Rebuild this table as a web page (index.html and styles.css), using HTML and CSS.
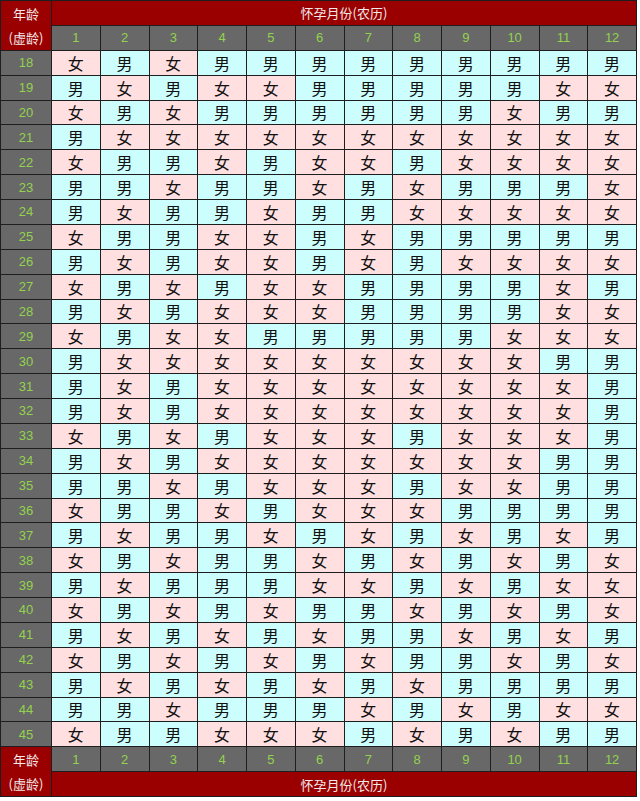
FILE: index.html
```html
<!DOCTYPE html>
<html lang="zh-CN">
<head>
<meta charset="utf-8">
<title>清宫图</title>
<link rel="stylesheet" href="styles.css">
</head>
<body>
<div class="chart">
  <div class="corner corner-top"><span>年龄</span><span>(虚龄)</span></div>
  <div class="title title-top">怀孕月份(农历)</div>
  <div class="num">1</div><div class="num">2</div><div class="num">3</div><div class="num">4</div><div class="num">5</div><div class="num">6</div><div class="num">7</div><div class="num">8</div><div class="num">9</div><div class="num">10</div><div class="num">11</div><div class="num">12</div>

  <div class="age">18</div><div class="c f">女</div><div class="c m">男</div><div class="c f">女</div><div class="c m">男</div><div class="c m">男</div><div class="c m">男</div><div class="c m">男</div><div class="c m">男</div><div class="c m">男</div><div class="c m">男</div><div class="c m">男</div><div class="c m">男</div>
  <div class="age">19</div><div class="c m">男</div><div class="c f">女</div><div class="c m">男</div><div class="c f">女</div><div class="c f">女</div><div class="c m">男</div><div class="c m">男</div><div class="c m">男</div><div class="c m">男</div><div class="c m">男</div><div class="c f">女</div><div class="c f">女</div>
  <div class="age">20</div><div class="c f">女</div><div class="c m">男</div><div class="c f">女</div><div class="c m">男</div><div class="c m">男</div><div class="c m">男</div><div class="c m">男</div><div class="c m">男</div><div class="c m">男</div><div class="c f">女</div><div class="c m">男</div><div class="c m">男</div>
  <div class="age">21</div><div class="c m">男</div><div class="c f">女</div><div class="c f">女</div><div class="c f">女</div><div class="c f">女</div><div class="c f">女</div><div class="c f">女</div><div class="c f">女</div><div class="c f">女</div><div class="c f">女</div><div class="c f">女</div><div class="c f">女</div>
  <div class="age">22</div><div class="c f">女</div><div class="c m">男</div><div class="c m">男</div><div class="c f">女</div><div class="c m">男</div><div class="c f">女</div><div class="c f">女</div><div class="c m">男</div><div class="c f">女</div><div class="c f">女</div><div class="c f">女</div><div class="c f">女</div>
  <div class="age">23</div><div class="c m">男</div><div class="c m">男</div><div class="c f">女</div><div class="c m">男</div><div class="c m">男</div><div class="c f">女</div><div class="c m">男</div><div class="c f">女</div><div class="c m">男</div><div class="c m">男</div><div class="c m">男</div><div class="c f">女</div>
  <div class="age">24</div><div class="c m">男</div><div class="c f">女</div><div class="c m">男</div><div class="c m">男</div><div class="c f">女</div><div class="c m">男</div><div class="c m">男</div><div class="c f">女</div><div class="c f">女</div><div class="c f">女</div><div class="c f">女</div><div class="c f">女</div>
  <div class="age">25</div><div class="c f">女</div><div class="c m">男</div><div class="c m">男</div><div class="c f">女</div><div class="c f">女</div><div class="c m">男</div><div class="c f">女</div><div class="c m">男</div><div class="c m">男</div><div class="c m">男</div><div class="c m">男</div><div class="c m">男</div>
  <div class="age">26</div><div class="c m">男</div><div class="c f">女</div><div class="c m">男</div><div class="c f">女</div><div class="c f">女</div><div class="c m">男</div><div class="c f">女</div><div class="c m">男</div><div class="c f">女</div><div class="c f">女</div><div class="c f">女</div><div class="c f">女</div>
  <div class="age">27</div><div class="c f">女</div><div class="c m">男</div><div class="c f">女</div><div class="c m">男</div><div class="c f">女</div><div class="c f">女</div><div class="c m">男</div><div class="c m">男</div><div class="c m">男</div><div class="c m">男</div><div class="c f">女</div><div class="c m">男</div>
  <div class="age">28</div><div class="c m">男</div><div class="c f">女</div><div class="c m">男</div><div class="c f">女</div><div class="c f">女</div><div class="c f">女</div><div class="c m">男</div><div class="c m">男</div><div class="c m">男</div><div class="c m">男</div><div class="c f">女</div><div class="c f">女</div>
  <div class="age">29</div><div class="c f">女</div><div class="c m">男</div><div class="c f">女</div><div class="c f">女</div><div class="c m">男</div><div class="c m">男</div><div class="c m">男</div><div class="c m">男</div><div class="c m">男</div><div class="c f">女</div><div class="c f">女</div><div class="c f">女</div>
  <div class="age">30</div><div class="c m">男</div><div class="c f">女</div><div class="c f">女</div><div class="c f">女</div><div class="c f">女</div><div class="c f">女</div><div class="c f">女</div><div class="c f">女</div><div class="c f">女</div><div class="c f">女</div><div class="c m">男</div><div class="c m">男</div>
  <div class="age">31</div><div class="c m">男</div><div class="c f">女</div><div class="c m">男</div><div class="c f">女</div><div class="c f">女</div><div class="c f">女</div><div class="c f">女</div><div class="c f">女</div><div class="c f">女</div><div class="c f">女</div><div class="c f">女</div><div class="c m">男</div>
  <div class="age">32</div><div class="c m">男</div><div class="c f">女</div><div class="c m">男</div><div class="c f">女</div><div class="c f">女</div><div class="c f">女</div><div class="c f">女</div><div class="c f">女</div><div class="c f">女</div><div class="c f">女</div><div class="c f">女</div><div class="c m">男</div>
  <div class="age">33</div><div class="c f">女</div><div class="c m">男</div><div class="c f">女</div><div class="c m">男</div><div class="c f">女</div><div class="c f">女</div><div class="c f">女</div><div class="c m">男</div><div class="c f">女</div><div class="c f">女</div><div class="c f">女</div><div class="c m">男</div>
  <div class="age">34</div><div class="c m">男</div><div class="c f">女</div><div class="c m">男</div><div class="c f">女</div><div class="c f">女</div><div class="c f">女</div><div class="c f">女</div><div class="c f">女</div><div class="c f">女</div><div class="c f">女</div><div class="c m">男</div><div class="c m">男</div>
  <div class="age">35</div><div class="c m">男</div><div class="c m">男</div><div class="c f">女</div><div class="c m">男</div><div class="c f">女</div><div class="c f">女</div><div class="c f">女</div><div class="c m">男</div><div class="c f">女</div><div class="c f">女</div><div class="c m">男</div><div class="c m">男</div>
  <div class="age">36</div><div class="c f">女</div><div class="c m">男</div><div class="c m">男</div><div class="c f">女</div><div class="c m">男</div><div class="c f">女</div><div class="c f">女</div><div class="c f">女</div><div class="c m">男</div><div class="c m">男</div><div class="c m">男</div><div class="c m">男</div>
  <div class="age">37</div><div class="c m">男</div><div class="c f">女</div><div class="c m">男</div><div class="c m">男</div><div class="c f">女</div><div class="c m">男</div><div class="c f">女</div><div class="c m">男</div><div class="c f">女</div><div class="c m">男</div><div class="c f">女</div><div class="c m">男</div>
  <div class="age">38</div><div class="c f">女</div><div class="c m">男</div><div class="c f">女</div><div class="c m">男</div><div class="c m">男</div><div class="c f">女</div><div class="c m">男</div><div class="c f">女</div><div class="c m">男</div><div class="c f">女</div><div class="c m">男</div><div class="c f">女</div>
  <div class="age">39</div><div class="c m">男</div><div class="c f">女</div><div class="c m">男</div><div class="c m">男</div><div class="c m">男</div><div class="c f">女</div><div class="c f">女</div><div class="c m">男</div><div class="c f">女</div><div class="c m">男</div><div class="c f">女</div><div class="c f">女</div>
  <div class="age">40</div><div class="c f">女</div><div class="c m">男</div><div class="c f">女</div><div class="c m">男</div><div class="c f">女</div><div class="c m">男</div><div class="c m">男</div><div class="c f">女</div><div class="c m">男</div><div class="c f">女</div><div class="c m">男</div><div class="c f">女</div>
  <div class="age">41</div><div class="c m">男</div><div class="c f">女</div><div class="c m">男</div><div class="c f">女</div><div class="c m">男</div><div class="c f">女</div><div class="c m">男</div><div class="c m">男</div><div class="c f">女</div><div class="c m">男</div><div class="c f">女</div><div class="c m">男</div>
  <div class="age">42</div><div class="c f">女</div><div class="c m">男</div><div class="c f">女</div><div class="c m">男</div><div class="c f">女</div><div class="c m">男</div><div class="c f">女</div><div class="c m">男</div><div class="c m">男</div><div class="c f">女</div><div class="c m">男</div><div class="c f">女</div>
  <div class="age">43</div><div class="c m">男</div><div class="c f">女</div><div class="c m">男</div><div class="c f">女</div><div class="c m">男</div><div class="c f">女</div><div class="c m">男</div><div class="c f">女</div><div class="c m">男</div><div class="c m">男</div><div class="c m">男</div><div class="c m">男</div>
  <div class="age">44</div><div class="c m">男</div><div class="c m">男</div><div class="c f">女</div><div class="c m">男</div><div class="c m">男</div><div class="c m">男</div><div class="c f">女</div><div class="c m">男</div><div class="c f">女</div><div class="c m">男</div><div class="c f">女</div><div class="c f">女</div>
  <div class="age">45</div><div class="c f">女</div><div class="c m">男</div><div class="c m">男</div><div class="c f">女</div><div class="c f">女</div><div class="c f">女</div><div class="c m">男</div><div class="c f">女</div><div class="c m">男</div><div class="c f">女</div><div class="c m">男</div><div class="c m">男</div>

  <div class="corner corner-bottom"><span>年龄</span><span>(虚龄)</span></div>
  <div class="num">1</div><div class="num">2</div><div class="num">3</div><div class="num">4</div><div class="num">5</div><div class="num">6</div><div class="num">7</div><div class="num">8</div><div class="num">9</div><div class="num">10</div><div class="num">11</div><div class="num">12</div>
  <div class="title title-bottom">怀孕月份(农历)</div>
</div>
</body>
</html>
```

FILE: styles.css
```css
html, body {
  margin: 0;
  padding: 0;
  background: #ffffff;
}

.chart {
  width: 637px;
  height: 797px;
  box-sizing: border-box;
  padding: 1px;
  display: grid;
  grid-template-columns: 50px repeat(12, 1fr);
  grid-template-rows: repeat(32, 1fr);
  gap: 1px;
  background: #1e1e1e;
  font-family: "Noto Sans CJK SC", "DejaVu Sans", sans-serif;
}

.chart > div {
  display: flex;
  align-items: center;
  justify-content: center;
  min-width: 0;
  min-height: 0;
}

.corner {
  background: #9a0000;
  color: #f0eaea;
  font-size: 13px;
  line-height: 1;
  flex-direction: column;
  justify-content: space-around !important;
}

.corner-top {
  grid-column: 1;
  grid-row: 1 / span 2;
}

.corner-bottom {
  grid-column: 1;
  grid-row: 31 / span 2;
}

.title {
  background: #9a0000;
  color: #f0eaea;
  font-size: 13px;
  grid-column: 2 / span 12;
}

.title-top {
  grid-row: 1;
}

.title-bottom {
  grid-row: 32;
}

.num,
.age {
  background: #686868;
  color: #93d24e;
  font-family: "Liberation Sans", Arial, sans-serif;
  font-size: 13px;
}

.c {
  font-size: 16px;
  color: #111111;
}

.m {
  background: #ccfefe;
}

.f {
  background: #ffdfe0;
}
```
